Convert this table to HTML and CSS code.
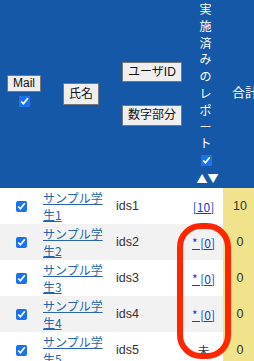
FILE: index.html
```html
<!DOCTYPE html>
<html lang="ja">
<head>
<meta charset="utf-8">
<title>Report</title>
<link rel="stylesheet" href="styles.css">
</head>
<body>
<div class="page">
<table class="grid">
  <colgroup>
    <col class="w-mail"><col class="w-name"><col class="w-id"><col class="w-report"><col class="w-total">
  </colgroup>
  <thead>
    <tr class="head">
      <th class="h-mail">
        <div class="stack">
          <button class="btn" type="button">Mail</button>
          <input class="cb" type="checkbox" checked>
        </div>
      </th>
      <th class="h-name"><button class="btn btn-tall" type="button">氏名</button></th>
      <th class="h-id">
        <div class="stack stack-wide">
          <button class="btn btn-cjk" type="button">ユーザID</button>
          <button class="btn btn-cjk btn-cjk2" type="button">数字部分</button>
        </div>
      </th>
      <th class="h-report">
        <div class="vtext">実施済みのレポート</div>
        <div class="cb-line"><input class="cb" type="checkbox" checked></div>
        <div class="sort">▲▼</div>
      </th>
      <th class="h-total">合計</th>
    </tr>
  </thead>
  <tbody>
    <tr>
      <td class="d-cb"><input class="cb" type="checkbox" checked></td>
      <td class="d-name"><a class="name" href="#">サンプル学生1</a></td>
      <td class="d-id">ids1</td>
      <td class="d-report"><a class="rep" href="#">[10]</a></td>
      <td class="d-total">10</td>
    </tr>
    <tr class="alt">
      <td class="d-cb"><input class="cb" type="checkbox" checked></td>
      <td class="d-name"><a class="name" href="#">サンプル学生2</a></td>
      <td class="d-id">ids2</td>
      <td class="d-report"><a class="rep" href="#">* [0]</a></td>
      <td class="d-total">0</td>
    </tr>
    <tr>
      <td class="d-cb"><input class="cb" type="checkbox" checked></td>
      <td class="d-name"><a class="name" href="#">サンプル学生3</a></td>
      <td class="d-id">ids3</td>
      <td class="d-report"><a class="rep" href="#">* [0]</a></td>
      <td class="d-total">0</td>
    </tr>
    <tr class="alt">
      <td class="d-cb"><input class="cb" type="checkbox" checked></td>
      <td class="d-name"><a class="name" href="#">サンプル学生4</a></td>
      <td class="d-id">ids4</td>
      <td class="d-report"><a class="rep" href="#">* [0]</a></td>
      <td class="d-total">0</td>
    </tr>
    <tr>
      <td class="d-cb"><input class="cb" type="checkbox" checked></td>
      <td class="d-name"><a class="name" href="#">サンプル学生5</a></td>
      <td class="d-id">ids5</td>
      <td class="d-report">未</td>
      <td class="d-total">0</td>
    </tr>
  </tbody>
</table>
<div class="mark"></div>
</div>
</body>
</html>
```
FILE: styles.css
```css
html, body {
  margin: 0;
  padding: 0;
  overflow: hidden;
  background: #ffffff;
}
body {
  font-family: "Liberation Sans", "Noto Sans CJK JP", sans-serif;
  font-size: 12px;
  color: #333333;
}
.page {
  position: relative;
  width: 254px;
  height: 361px;
  overflow: hidden;
}
.grid {
  border-collapse: collapse;
  border-spacing: 0;
  table-layout: fixed;
  width: 259px;
}
.w-mail { width: 42px; }
.w-name { width: 72px; }
.w-id { width: 74px; }
.w-report { width: 35px; }
.w-total { width: 36px; }

.head th {
  background: #1658a8;
  color: #ffffff;
  font-weight: normal;
  padding: 0;
  vertical-align: middle;
}
.stack {
  display: flex;
  flex-direction: column;
  align-items: center;
  gap: 4px;
}
.h-mail { padding: 0 0 6px 6px !important; }
.h-name { padding-left: 6px !important; text-align: center; }
.stack-wide { gap: 23px; }
.h-id { padding-left: 2px !important; }
.btn {
  font-family: "Liberation Sans", "Noto Sans CJK JP", sans-serif;
  font-size: 12px;
  line-height: 15px;
  padding: 0 5px;
  margin: 0;
  border: 1px solid #767676;
  border-radius: 0;
  background: #efefef;
  color: #111111;
}
.btn-tall { line-height: 20px; }
.btn-cjk { line-height: 18px; }
.btn-cjk2 { line-height: 19px; }
.cb {
  width: 11px;
  height: 11px;
  margin: 0;
  accent-color: #1a72f0;
}
.vtext {
  width: 12px;
  margin: 0 auto;
  padding-top: 1px;
  font-size: 12px;
  line-height: 16.8px;
  word-break: break-all;
  line-break: anywhere;
  font-family: "Noto Sans CJK JP", sans-serif;
}
.cb-line {
  height: 17px;
  display: flex;
  justify-content: center;
  align-items: center;
  padding-left: 1px;
}
.sort {
  height: 19px;
  line-height: 19px;
  font-size: 11px;
  font-family: "Noto Sans CJK JP", sans-serif;
  text-align: center;
  padding-left: 4px;
}
.h-total {
  text-align: left;
  padding: 0 0 5px 9px !important;
  font-size: 13px;
  font-family: "Noto Sans CJK JP", sans-serif;
}

tbody td {
  padding: 1px 0;
  height: 34px;
  line-height: 17px;
  vertical-align: middle;
  background: #ffffff;
}
tbody tr.alt td { background: #f2f2f2; }
.d-cb { text-align: center; font-size: 0; line-height: 0 !important; }
.d-cb .cb { vertical-align: middle; }
.d-name {
  padding-left: 1px !important;
  font-family: "Noto Sans CJK JP", sans-serif;
}
.name {
  color: #2a64aa;
  text-decoration: underline;
}
.d-id { padding-left: 2px !important; font-size: 12.5px; }
.d-report {
  text-align: center;
  padding-right: 4px !important;
  font-family: "Noto Sans CJK JP", sans-serif;
}
.rep {
  color: #1a3cd4;
  text-decoration: underline;
}
tbody td.d-total {
  background: #f0e38c;
  text-align: center;
  padding-right: 2px;
  font-size: 12.5px;
}
tbody tr.alt td.d-total { background: #f0e38c; }

.mark {
  position: absolute;
  left: 177px;
  top: 223px;
  width: 54px;
  height: 136px;
  box-sizing: border-box;
  border: 6px solid #ff2600;
  border-radius: 24px;
}
```
